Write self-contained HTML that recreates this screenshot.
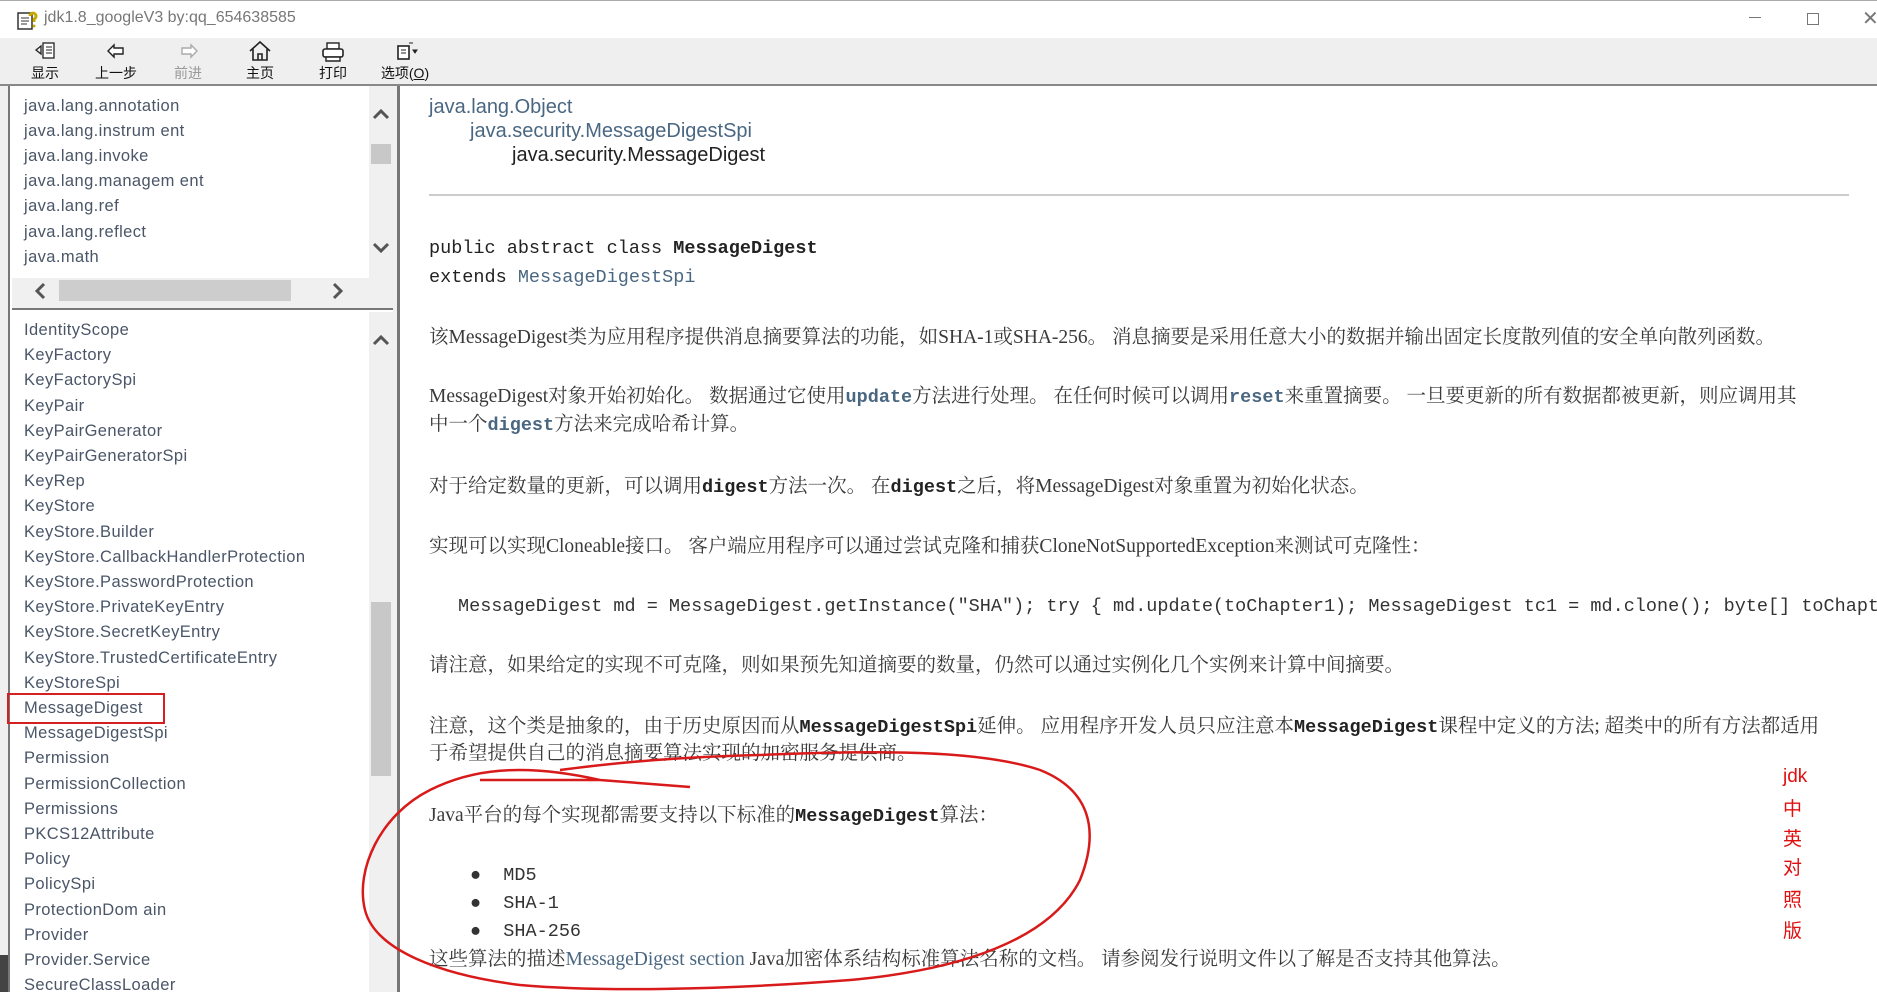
<!DOCTYPE html>
<html><head><meta charset="utf-8"><style>
*{margin:0;padding:0;box-sizing:border-box}
body{width:1877px;height:992px;overflow:hidden;background:#fff;position:relative;font-family:"Liberation Sans","Noto Sans CJK SC",sans-serif}
.a{position:absolute;white-space:nowrap}
.tb{font-size:14px;color:#111;text-align:center;width:70px}
.li{position:absolute;left:24px;font-size:16.5px;color:#4a5668;letter-spacing:0.4px;white-space:nowrap;line-height:20px}
.p{position:absolute;left:429px;font-family:"Liberation Serif","Noto Serif CJK SC",serif;font-size:19.5px;color:#3a3a3a;white-space:nowrap;line-height:24px}
.m{font-family:"Liberation Mono","Noto Sans CJK SC",monospace;font-size:18.5px}
.b{font-weight:bold;color:#222}
.lk{color:#4a6782}
.rd{position:absolute;left:1783px;color:#e01010;font-size:19px;font-family:"Liberation Sans","Noto Sans CJK SC",sans-serif}
</style></head><body>
<div class="a" style="left:0;top:0;width:1877px;height:38px;background:#fff;border-top:1px solid #aaa"></div>
<svg class="a" style="left:16px;top:8px" width="24" height="24" viewBox="0 0 24 24"><rect x="2" y="5" width="14" height="16" fill="#fff" stroke="#333" stroke-width="1.5"/><path d="M5 10h8M5 13h8M5 16h6" stroke="#333"/><path d="M14 8a3 3 0 1 1 4 3v3" stroke="#c8a800" stroke-width="3" fill="none"/><circle cx="18" cy="18" r="1.5" fill="#c8a800"/></svg>
<div class="a" style="left:44px;top:9px;font-size:16px;color:#777">jdk1.8_googleV3 by:qq_654638585</div>
<div class="a" style="left:1749px;top:17px;width:12px;height:1px;background:#777"></div>
<div class="a" style="left:1807px;top:13px;width:12px;height:12px;border:1px solid #777"></div>
<div class="a" style="left:1862px;top:6px;font-size:20px;color:#777">✕</div>
<div class="a" style="left:0;top:38px;width:1877px;height:48px;background:#efefef;border-bottom:2px solid #888"></div>
<svg class="a" style="left:34px;top:41px" width="24" height="20" viewBox="0 0 24 20"><path d="M2 9l5-4v8z" fill="none" stroke="#222" stroke-width="1.3"/><rect x="9" y="2" width="11" height="15" fill="#fff" stroke="#222" stroke-width="1.3"/><path d="M12 6h6M12 9h6M12 12h6" stroke="#222"/></svg>
<svg class="a" style="left:106px;top:43px" width="20" height="16" viewBox="0 0 20 16"><path d="M2 8l6-6v3h9v6H8v3z" fill="#fff" stroke="#222" stroke-width="1.4"/></svg>
<svg class="a" style="left:179px;top:43px" width="20" height="16" viewBox="0 0 20 16"><path d="M18 8l-6-6v3H3v6h9v3z" fill="#fff" stroke="#aaa" stroke-width="1.4"/></svg>
<svg class="a" style="left:248px;top:40px" width="24" height="22" viewBox="0 0 24 22"><path d="M2 11L12 2l10 9M5 9v11h14V9M10 20v-6h4v6" fill="none" stroke="#222" stroke-width="1.6"/></svg>
<svg class="a" style="left:321px;top:42px" width="24" height="20" viewBox="0 0 24 20"><rect x="6" y="1" width="12" height="6" fill="#fff" stroke="#222" stroke-width="1.4"/><rect x="2" y="7" width="20" height="8" rx="2" fill="#fff" stroke="#222" stroke-width="1.6"/><path d="M5 15h14v4H5z" fill="#fff" stroke="#222" stroke-width="1.4"/></svg>
<svg class="a" style="left:395px;top:41px" width="24" height="20" viewBox="0 0 24 20"><rect x="3" y="5" width="11" height="13" fill="#fff" stroke="#222" stroke-width="1.6"/><path d="M6 9h5M6 12h5" stroke="#222"/><path d="M14 2l4 0M18 9l4 0l-2 3z" stroke="#222" fill="#222"/></svg>
<div class="a tb" style="left:10px;top:63px">显示</div>
<div class="a tb" style="left:81px;top:63px">上一步</div>
<div class="a tb" style="left:153px;top:63px;color:#999">前进</div>
<div class="a tb" style="left:225px;top:63px">主页</div>
<div class="a tb" style="left:298px;top:63px">打印</div>
<div class="a tb" style="left:370px;top:63px">选项(<u>O</u>)</div>
<div class="a" style="left:0;top:86px;width:10px;height:906px;background:#f0f0f0;border-right:2px solid #777"></div>
<div class="a" style="left:0;top:955px;width:8px;height:37px;background:#444"></div>
<div class="a" style="left:369px;top:86px;width:24px;height:192px;background:#f0f0f0"></div>
<div class="a" style="left:371px;top:144px;width:20px;height:20px;background:#c8c8c8"></div>
<svg class="a" style="left:372px;top:108px" width="18" height="12"><path d="M2 10L9 3l7 7" fill="none" stroke="#555" stroke-width="3"/></svg>
<svg class="a" style="left:372px;top:242px" width="18" height="12"><path d="M2 2l7 7 7-7" fill="none" stroke="#555" stroke-width="3"/></svg>
<div class="li" style="top:96px">java.lang.annotation</div>
<div class="li" style="top:121px">java.lang.instrum ent</div>
<div class="li" style="top:146px">java.lang.invoke</div>
<div class="li" style="top:171px">java.lang.managem ent</div>
<div class="li" style="top:196px">java.lang.ref</div>
<div class="li" style="top:222px">java.lang.reflect</div>
<div class="li" style="top:247px">java.math</div>
<div class="a" style="left:12px;top:278px;width:381px;height:32px;background:#f0f0f0;border-bottom:2px solid #777"></div>
<div class="a" style="left:59px;top:280px;width:232px;height:21px;background:#cdcdcd"></div>
<svg class="a" style="left:34px;top:282px" width="12" height="18"><path d="M10 2L3 9l7 7" fill="none" stroke="#555" stroke-width="3"/></svg>
<svg class="a" style="left:332px;top:282px" width="12" height="18"><path d="M2 2l7 7-7 7" fill="none" stroke="#555" stroke-width="3"/></svg>
<div class="a" style="left:369px;top:312px;width:24px;height:680px;background:#f0f0f0"></div>
<div class="a" style="left:371px;top:602px;width:20px;height:174px;background:#c8c8c8"></div>
<svg class="a" style="left:372px;top:334px" width="18" height="12"><path d="M2 10L9 3l7 7" fill="none" stroke="#555" stroke-width="3"/></svg>
<div class="li" style="top:320px">IdentityScope</div>
<div class="li" style="top:345px">KeyFactory</div>
<div class="li" style="top:370px">KeyFactorySpi</div>
<div class="li" style="top:396px">KeyPair</div>
<div class="li" style="top:421px">KeyPairGenerator</div>
<div class="li" style="top:446px">KeyPairGeneratorSpi</div>
<div class="li" style="top:471px">KeyRep</div>
<div class="li" style="top:496px">KeyStore</div>
<div class="li" style="top:522px">KeyStore.Builder</div>
<div class="li" style="top:547px">KeyStore.CallbackHandlerProtection</div>
<div class="li" style="top:572px">KeyStore.PasswordProtection</div>
<div class="li" style="top:597px">KeyStore.PrivateKeyEntry</div>
<div class="li" style="top:622px">KeyStore.SecretKeyEntry</div>
<div class="li" style="top:648px">KeyStore.TrustedCertificateEntry</div>
<div class="li" style="top:673px">KeyStoreSpi</div>
<div class="li" style="top:698px">MessageDigest</div>
<div class="li" style="top:723px">MessageDigestSpi</div>
<div class="li" style="top:748px">Permission</div>
<div class="li" style="top:774px">PermissionCollection</div>
<div class="li" style="top:799px">Permissions</div>
<div class="li" style="top:824px">PKCS12Attribute</div>
<div class="li" style="top:849px">Policy</div>
<div class="li" style="top:874px">PolicySpi</div>
<div class="li" style="top:900px">ProtectionDom ain</div>
<div class="li" style="top:925px">Provider</div>
<div class="li" style="top:950px">Provider.Service</div>
<div class="li" style="top:975px">SecureClassLoader</div>
<div class="a" style="left:7px;top:693px;width:158px;height:31px;border:2px solid #d42020"></div>
<div class="a" style="left:393px;top:86px;width:7px;height:906px;background:#f0f0f0;border-right:3px solid #777"></div>
<div class="p lk" style="top:95px;font-family:'Liberation Sans Narrow','Liberation Sans',sans-serif;font-size:20px">java.lang.Object</div>
<div class="p lk" style="left:470px;top:119px;font-family:'Liberation Sans Narrow','Liberation Sans',sans-serif;font-size:20px">java.security.MessageDigestSpi</div>
<div class="p" style="left:512px;top:143px;font-family:'Liberation Sans Narrow','Liberation Sans',sans-serif;font-size:20px;color:#222">java.security.MessageDigest</div>
<div class="a" style="left:429px;top:194px;width:1420px;height:2px;background:#ccc"></div>
<div class="p m" style="top:237px;color:#222">public abstract class <b>MessageDigest</b></div>
<div class="p m" style="top:266px;color:#222">extends <span class="lk">MessageDigestSpi</span></div>
<div class="p" style="top:326px">该MessageDigest类为应用程序提供消息摘要算法的功能，如SHA-1或SHA-256。 消息摘要是采用任意大小的数据并输出固定长度散列值的安全单向散列函数。</div>
<div class="p" style="top:385px">MessageDigest对象开始初始化。 数据通过它使用<span class="m lk b">update</span>方法进行处理。 在任何时候可以调用<span class="m lk b">reset</span>来重置摘要。 一旦要更新的所有数据都被更新，则应调用其</div>
<div class="p" style="top:413px">中一个<span class="m lk b">digest</span>方法来完成哈希计算。</div>
<div class="p" style="top:475px">对于给定数量的更新，可以调用<span class="m b">digest</span>方法一次。 在<span class="m b">digest</span>之后，将MessageDigest对象重置为初始化状态。</div>
<div class="p" style="top:535px">实现可以实现Cloneable接口。 客户端应用程序可以通过尝试克隆和捕获CloneNotSupportedException来测试可克隆性：</div>
<div class="p m" style="left:458px;top:595px;color:#333;width:1419px;overflow:hidden">MessageDigest md = MessageDigest.getInstance("SHA"); try { md.update(toChapter1); MessageDigest tc1 = md.clone(); byte[] toChapter1Digest = tc1.digest();</div>
<div class="p" style="top:654px">请注意，如果给定的实现不可克隆，则如果预先知道摘要的数量，仍然可以通过实例化几个实例来计算中间摘要。</div>
<div class="p" style="top:715px">注意，这个类是抽象的，由于历史原因而从<span class="m b">MessageDigestSpi</span>延伸。 应用程序开发人员只应注意本<span class="m b">MessageDigest</span>课程中定义的方法; 超类中的所有方法都适用</div>
<div class="p" style="top:742px">于希望提供自己的消息摘要算法实现的加密服务提供商。</div>
<div class="p" style="top:804px">Java平台的每个实现都需要支持以下标准的<span class="m b">MessageDigest</span>算法：</div>
<div class="p m" style="left:470px;top:864px;color:#333">●&nbsp; MD5</div>
<div class="p m" style="left:470px;top:892px;color:#333">●&nbsp; SHA-1</div>
<div class="p m" style="left:470px;top:920px;color:#333">●&nbsp; SHA-256</div>
<div class="p" style="top:948px">这些算法的描述<span class="lk">MessageDigest section</span> Java加密体系结构标准算法名称的文档。 请参阅发行说明文件以了解是否支持其他算法。</div>
<div class="rd" style="top:766px">jdk</div>
<div class="rd" style="top:794px">中</div>
<div class="rd" style="top:824px">英</div>
<div class="rd" style="top:853px">对</div>
<div class="rd" style="top:885px">照</div>
<div class="rd" style="top:916px">版</div>
<svg class="a" style="left:0;top:0" width="1877" height="992" viewBox="0 0 1877 992"><path d="M480 780 L600 780 L690 787 M600 780 C520 762 470 770 430 790 C380 815 355 870 365 910 C375 950 440 975 520 985 C600 992 720 990 850 980 C960 970 1050 940 1080 880 C1100 830 1090 790 1040 770 C980 750 880 750 760 755 C680 757 620 762 560 770" fill="none" stroke="#d81a1a" stroke-width="2.5"/></svg>
</body></html>
